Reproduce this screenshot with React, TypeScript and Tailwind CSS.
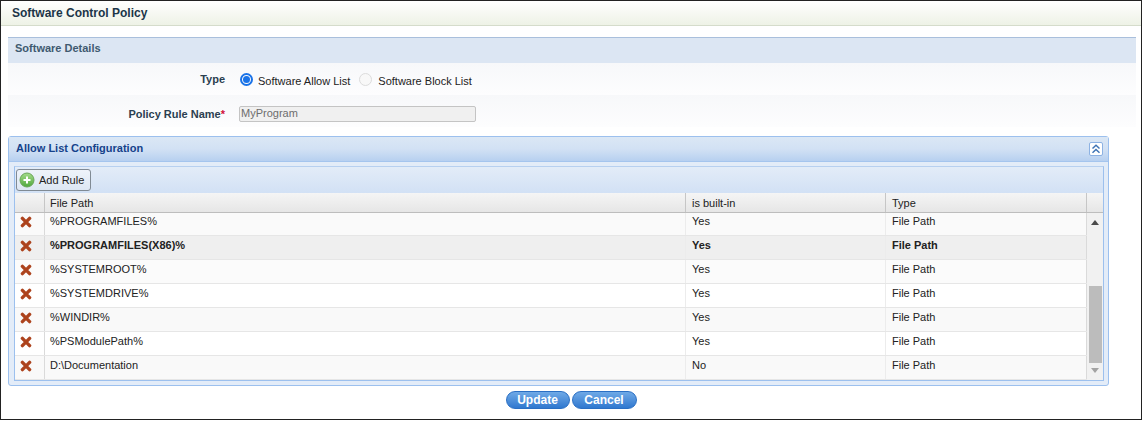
const rows = [
    { path: '%PROGRAMFILES%', builtIn: 'Yes', h: 'h-[23px]', top: 'pt-0', bg: 'bg-[#fafafa]', iconPad: 'pb-[5px]' },
    { path: '%PROGRAMFILES(X86)%', builtIn: 'Yes', bg: 'bg-[#efefef] font-bold' },
    { path: '%SYSTEMROOT%', builtIn: 'Yes', bg: 'bg-[#fbfbfb]' },
    { path: '%SYSTEMDRIVE%', builtIn: 'Yes', bg: 'bg-white' },
    { path: '%WINDIR%', builtIn: 'Yes', bg: 'bg-[#f9f9f9]' },
    { path: '%PSModulePath%', builtIn: 'Yes', bg: 'bg-white' },
    { path: 'D:\\Documentation', builtIn: 'No', bg: 'bg-[#f9f9f9]' },
];

function DeleteIcon() {
    return (
        <svg width="12" height="12" viewBox="0 0 12 12">
            <path d="M2.4 2.4 L9.6 9.6 M9.6 2.4 L2.4 9.6" stroke="#ad431d" strokeWidth="3.4" strokeLinecap="round" />
        </svg>
    );
}

function AddIcon() {
    return (
        <svg width="16" height="16" viewBox="0 0 16 16">
            <defs>
                <linearGradient id="addGreen" x1="0" y1="0" x2="0" y2="1">
                    <stop offset="0" stopColor="#a5dc8c" />
                    <stop offset="1" stopColor="#4fa83c" />
                </linearGradient>
            </defs>
            <circle cx="8" cy="8" r="7" fill="url(#addGreen)" stroke="#6aa65a" strokeWidth="1" />
            <path d="M8 4.5 V11.5 M4.5 8 H11.5" stroke="#fff" strokeWidth="2" />
        </svg>
    );
}

export default function App() {
    return (
        <div className="w-[1142px] h-[420px] flex flex-col bg-white border border-[#222] font-['Liberation_Sans',Arial,sans-serif] text-[11px] text-[#222]">
            {/* Title */}
            <div className="h-[25px] shrink-0 flex items-center pl-[11px] bg-gradient-to-b from-white to-[#eef2e6] border-b border-[#d5dccb] rounded-tl-[6px]">
                <span className="text-[12px] font-bold text-[#1c3548]">Software Control Policy</span>
            </div>

            <div className="flex flex-col pl-[7px] pr-[5px] pt-[11px]">
                {/* Software Details */}
                <div className="h-[26px] flex items-center pl-[7px] pb-[4px] bg-[#dce6f3] border-t border-[#a9bfdc] text-[#3f5a70] font-bold">
                    Software Details
                </div>
                <div className="h-[32px] flex items-center bg-gradient-to-b from-[#f7f8fa] to-[#fdfdfe]">
                    <div className="w-[217px] text-right font-bold text-[#2b3f50] mt-[1px]">Type</div>
                    <span className="ml-[15px] w-[13px] h-[13px] rounded-full border-[2px] border-[#1a73e8] flex items-center justify-center">
                        <span className="w-[7px] h-[7px] rounded-full bg-[#1a73e8]"></span>
                    </span>
                    <span className="ml-[5px] mt-[5px]">Software Allow List</span>
                    <span className="ml-[9px] w-[13px] h-[13px] rounded-full border border-[#dcdcdc] bg-[#f8f8f8]"></span>
                    <span className="ml-[6px] mt-[5px]">Software Block List</span>
                </div>
                <div className="h-[32px] flex items-center bg-gradient-to-b from-[#f7f8fa] to-[#fdfdfe]">
                    <div className="w-[217px] text-right font-bold text-[#2b3f50] mt-[6px]">
                        Policy Rule Name<span className="text-[#d0103a]">*</span>
                    </div>
                    <div className="ml-[14px] w-[237px] h-[16px] flex items-center pl-[1px] bg-[#f0f0f0] border border-[#c4c4c4] rounded-[2px] text-[#6d6d6d] mt-[5px]">
                        MyProgram
                    </div>
                </div>
            </div>

            {/* Allow List panel */}
            <div className="ml-[7px] mt-[9px] w-[1101px] h-[250px] flex flex-col bg-[#e3ecf8] border border-[#9cc0ee] rounded-[3px]">
                <div className="h-[25px] shrink-0 flex items-center justify-between pl-[7px] pr-[5px] bg-gradient-to-b from-[#dbe7f5] via-[#d2e1f4] to-[#b7d0f0] border-b border-[#a5c5ee]">
                    <span className="font-bold text-[#15428b] mb-[2px]">Allow List Configuration</span>
                    <span className="w-[14px] h-[14px] flex items-center justify-center bg-white border border-[#8db2e3] rounded-[2px]">
                        <svg width="10" height="10" viewBox="0 0 10 10" fill="none" stroke="#3f74b5" strokeWidth="1.5">
                            <path d="M1.5 4.5 L5 1.2 L8.5 4.5 M1.5 8.8 L5 5.5 L8.5 8.8" />
                        </svg>
                    </span>
                </div>

                <div className="ml-[5px] mr-[4px] mt-[4px] flex flex-col border border-[#9cc0ee] border-t-[#b7d0f0] bg-white">
                    {/* Toolbar */}
                    <div className="h-[26px] shrink-0 flex items-center pl-[1px] bg-gradient-to-b from-[#e3ecf8] to-[#d2e1f5]">
                        <button className="h-[22px] w-[75px] flex items-center gap-[4px] pl-[2px] border border-[#808a94] rounded-[3px] text-[#222] text-[11px] bg-gradient-to-b from-[#eef3fa] to-[#dde7f3]">
                            <AddIcon />
                            Add Rule
                        </button>
                    </div>

                    {/* Header */}
                    <div className="h-[20px] shrink-0 flex bg-gradient-to-b from-[#f5f5f5] to-[#e6e6e6] border-b border-[#bdbdbd]">
                        <div className="w-[30px] h-full border-r border-[#c6c6c6]"></div>
                        <div className="w-[641px] pl-[5px] h-full flex items-center pt-[2px] border-r border-[#c6c6c6]">File Path</div>
                        <div className="w-[200px] pl-[6px] h-full flex items-center pt-[2px] border-r border-[#c6c6c6]">is built-in</div>
                        <div className="w-[201px] pl-[6px] h-full flex items-center pt-[2px] border-r border-[#c6c6c6]">Type</div>
                        <div className="flex-1"></div>
                    </div>

                    {/* Rows and scrollbar */}
                    <div className="flex">
                        <div className="w-[1072px] shrink-0 flex flex-col">
                            {rows.map((row) => (
                                <div key={row.path} className={`${row.h ?? 'h-[24px]'} flex border-b border-[#e6e6e6] ${row.bg}`}>
                                    <div className={`w-[30px] shrink-0 flex items-center pl-[5px] border-r border-[#dadada] ${row.iconPad ?? 'pb-[3px]'}`}>
                                        <DeleteIcon />
                                    </div>
                                    <div className={`w-[641px] shrink-0 pl-[5px] border-r border-[#ececec] ${row.top ?? 'pt-[1px]'}`}>{row.path}</div>
                                    <div className={`w-[200px] shrink-0 pl-[6px] border-r border-[#ececec] ${row.top ?? 'pt-[1px]'}`}>{row.builtIn}</div>
                                    <div className={`flex-1 pl-[6px] border-r border-[#dadada] ${row.top ?? 'pt-[1px]'}`}>File Path</div>
                                </div>
                            ))}
                        </div>
                        <div className="flex-1 flex flex-col items-center bg-[#f1f1f1]">
                            <svg width="8" height="5" viewBox="0 0 8 5" className="mt-[7px]">
                                <path d="M4 0 L8 5 L0 5 Z" fill="#4a4a4a" />
                            </svg>
                            <div className="w-[13px] h-[77px] mt-[61px] bg-[#bcbcbc]"></div>
                            <svg width="8" height="5" viewBox="0 0 8 5" className="mt-[5px]">
                                <path d="M0 0 L8 0 L4 5 Z" fill="#a3a3a3" />
                            </svg>
                        </div>
                    </div>
                </div>
            </div>

            {/* Actions */}
            <div className="mt-[5px] flex justify-center gap-[2px]">
                <button className="w-[64px] h-[18px] rounded-full border border-[#2a6fc4] bg-gradient-to-b from-[#6fa9e6] to-[#2f78cf] text-white font-bold text-[12px] leading-none">
                    Update
                </button>
                <button className="w-[65px] h-[18px] rounded-full border border-[#2a6fc4] bg-gradient-to-b from-[#6fa9e6] to-[#2f78cf] text-white font-bold text-[12px] leading-none">
                    Cancel
                </button>
            </div>
        </div>
    );
}
